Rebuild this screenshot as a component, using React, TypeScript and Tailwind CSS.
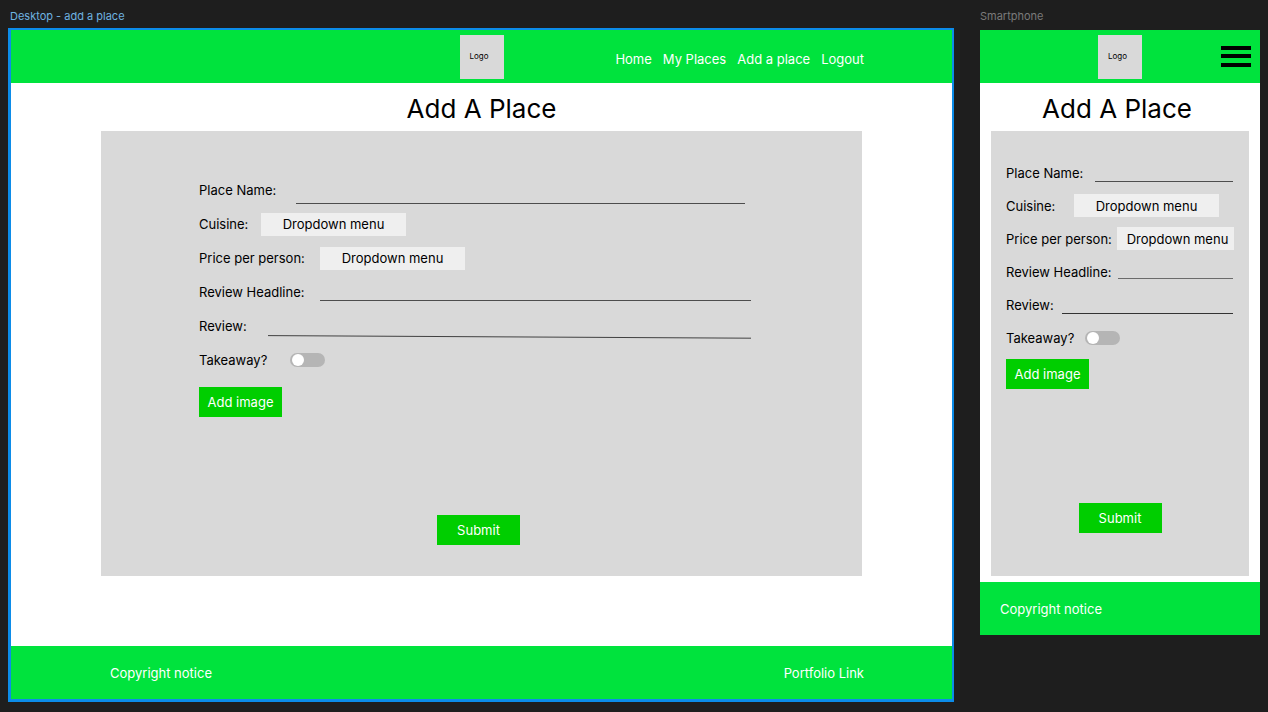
import type { ReactNode } from "react";

const lineInput = "min-w-0 flex-1 self-end border-b bg-transparent px-1 outline-none";
const dropdown =
  "h-[23px] appearance-none bg-[#efefef] text-center [text-align-last:center] outline-none";
const toggle =
  "h-3.5 w-[35px] appearance-none rounded-full bg-[#b5b5b5] before:mt-px before:ml-0.5 before:block before:size-3 before:rounded-full before:bg-white checked:bg-[#00ce00] checked:before:ml-[21px]";
const greenButton = "h-[30px] w-[83px] bg-[#00ce00] text-white";

function Logo() {
  return (
    <a
      href="#home"
      className="flex size-11 items-center bg-[#d9d9d9] pl-2.5 pb-0.5 text-[8px] leading-3"
    >
      Logo
    </a>
  );
}

function Title({ children }: { children: ReactNode }) {
  return <h1 className="pt-1 text-center text-[26px] leading-[44px]">{children}</h1>;
}

function DesktopForm() {
  return (
    <form className="mx-[90px] flex flex-col bg-[#d9d9d9] pt-[42px] pr-[104px] pb-[31px] pl-[98px]">
      <div className="flex h-[34px] items-center">
        <label htmlFor="d-name" className="w-[97px]">Place Name:</label>
        <input id="d-name" className={`${lineInput} mr-[13px] mb-[3px] border-[#4d4d4d]`} />
      </div>
      <div className="flex h-[34px] items-center">
        <label htmlFor="d-cuisine" className="w-[62px]">Cuisine:</label>
        <select id="d-cuisine" className={`${dropdown} w-[145px]`}>
          <option>Dropdown menu</option>
        </select>
      </div>
      <div className="flex h-[34px] items-center">
        <label htmlFor="d-price" className="w-[121px]">Price per person:</label>
        <select id="d-price" className={`${dropdown} w-[145px]`}>
          <option>Dropdown menu</option>
        </select>
      </div>
      <div className="flex h-[34px] items-center">
        <label htmlFor="d-headline" className="w-[121px]">Review Headline:</label>
        <input id="d-headline" className={`${lineInput} mr-[7px] mb-2 border-[#4d4d4d]`} />
      </div>
      <div className="flex h-[34px] items-center">
        <label htmlFor="d-review" className="w-[69px]">Review:</label>
        <div className="mr-[7px] mb-1 flex min-w-0 flex-1 flex-col self-end">
          <input id="d-review" className="w-full bg-transparent px-1 outline-none" />
          <svg
            className="h-1 w-full"
            viewBox="0 0 483 4"
            preserveAspectRatio="none"
            aria-hidden="true"
          >
            <path d="M0 0.6L483 3.2" stroke="#1a1a1a" strokeWidth="0.8" />
          </svg>
        </div>
      </div>
      <div className="flex h-[34px] items-center">
        <label htmlFor="d-takeaway" className="w-[91px]">Takeaway?</label>
        <input id="d-takeaway" type="checkbox" role="switch" className={toggle} />
      </div>
      <button type="button" className={`${greenButton} mt-2.5`}>Add image</button>
      <button type="submit" className={`${greenButton} mt-[98px] self-center`}>Submit</button>
    </form>
  );
}

function PhoneForm() {
  return (
    <form className="mx-[11px] flex flex-col bg-[#d9d9d9] px-[15px] pt-[25px] pb-[43px]">
      <div className="flex h-[33px] items-center">
        <label htmlFor="p-name" className="w-[89px]">Place Name:</label>
        <input id="p-name" className={`${lineInput} mr-px mb-[7px] border-[#4d4d4d]`} />
      </div>
      <div className="flex h-[33px] items-center">
        <label htmlFor="p-cuisine" className="w-[68px]">Cuisine:</label>
        <select id="p-cuisine" className={`${dropdown} w-[145px]`}>
          <option>Dropdown menu</option>
        </select>
      </div>
      <div className="flex h-[33px] items-center">
        <label htmlFor="p-price" className="w-[111px]">Price per person:</label>
        <select id="p-price" className={`${dropdown} min-w-0 flex-1 pl-1`}>
          <option>Dropdown menu</option>
        </select>
      </div>
      <div className="flex h-[33px] items-center">
        <label htmlFor="p-headline" className="w-28">Review Headline:</label>
        <input id="p-headline" className={`${lineInput} mr-px mb-[9px] border-[#6b6b6b]`} />
      </div>
      <div className="flex h-[33px] items-center">
        <label htmlFor="p-review" className="w-14">Review:</label>
        <input id="p-review" className={`${lineInput} mr-px mb-[7px] border-[#333333]`} />
      </div>
      <div className="flex h-[33px] items-center">
        <label htmlFor="p-takeaway" className="w-[79px]">Takeaway?</label>
        <input id="p-takeaway" type="checkbox" role="switch" className={toggle} />
      </div>
      <button type="button" className={`${greenButton} mt-[5px]`}>Add image</button>
      <button type="submit" className={`${greenButton} mt-[114px] self-center`}>Submit</button>
    </form>
  );
}

export default function App() {
  return (
    <div className="flex min-h-screen items-start gap-[26px] bg-[#1e1e1e] px-2 pt-2 font-['Inter',sans-serif] text-[13px] leading-5 text-black">
      <section className="min-w-0 flex-1">
        <h2 className="h-5 pl-0.5 text-[11px] leading-4 text-[#6fb3e0]">Desktop - add a place</h2>
        <div className="border-t-2 border-r-2 border-b-3 border-l-3 border-[#0c8ce9] bg-white">
          <header className="grid grid-cols-[1fr_auto_1fr] items-center bg-[#00e33d] pt-[5px] pb-1">
            <span />
            <Logo />
            <nav className="mt-1 mr-[88px] flex gap-[11px] justify-self-end whitespace-nowrap text-white">
              <a href="#home">Home</a>
              <a href="#my-places">My Places</a>
              <a href="#add-place">Add a place</a>
              <a href="#logout">Logout</a>
            </nav>
          </header>
          <main className="pb-[70px]">
            <Title>Add A Place</Title>
            <DesktopForm />
          </main>
          <footer className="flex h-[53px] items-center justify-between bg-[#00e33d] pr-[88px] pl-[99px] text-white">
            <p>Copyright notice</p>
            <a href="#portfolio">Portfolio Link</a>
          </footer>
        </div>
      </section>

      <section className="w-[280px] shrink-0">
        <h2 className="h-[22px] text-[11px] leading-4 text-[#7a7a7a]">Smartphone</h2>
        <div className="bg-white">
          <header className="grid grid-cols-[1fr_auto_1fr] items-center bg-[#00e33d] pt-[5px] pb-1">
            <span />
            <Logo />
            <button type="button" aria-label="Open menu" className="mr-[9px] mb-0.5 justify-self-end">
              <svg width="30" height="21" viewBox="0 0 30 21" aria-hidden="true">
                <path d="M0 0h30v4H0zM0 8h30v4H0zM0 17h30v4H0z" fill="#000" />
              </svg>
            </button>
          </header>
          <main className="pb-1.5">
            <div className="pr-1.5">
              <Title>Add A Place</Title>
            </div>
            <PhoneForm />
          </main>
          <footer className="flex h-[53px] items-center bg-[#00e33d] pl-5 text-white">
            <p>Copyright notice</p>
          </footer>
        </div>
      </section>
    </div>
  );
}
